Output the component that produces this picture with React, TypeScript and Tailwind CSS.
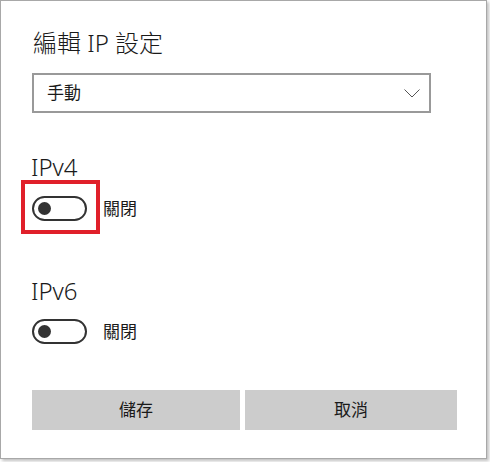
import React from "react";

const font = { fontFamily: '"Noto Sans", "Noto Sans CJK TC", sans-serif' };

function Toggle() {
  return (
    <div className="w-[55px] h-[25px] rounded-full border-2 border-[#333333] flex items-center box-border">
      <div className="w-[13px] h-[13px] rounded-full bg-[#333333] ml-[4px]" />
    </div>
  );
}

export default function App() {
  return (
    <div className="w-[490px] h-[462px] bg-white" style={font}>
      <div className="relative w-[487px] h-[459px] bg-white border border-[#a8a8a8] shadow-[2px_2px_3px_rgba(0,0,0,0.25)] box-border">
        <div className="flex flex-col pl-[31px] pt-[26px]">
          <div className="text-[24px] leading-[32px] font-light text-[#1a1a1a] pl-[1px]">編輯 IP 設定</div>
          <div className="mt-[14px] w-[399px] h-[40px] border-2 border-[#999999] flex items-center justify-between pl-[13px] pr-[9px] box-border">
            <span className="text-[17px] leading-[24px] text-[#1a1a1a]">手動</span>
            <svg width="16" height="9" viewBox="0 0 16 9" fill="none">
              <path d="M0.5 0.5 L8 8 L15.5 0.5" stroke="#555" strokeWidth="1" />
            </svg>
          </div>
          <div className="mt-[38px] -ml-[1px] text-[24px] leading-[32px] font-light text-[#1a1a1a]">IPv4</div>
          <div className="mt-[13px] flex items-center gap-[16px]">
            <Toggle />
            <span className="text-[17px] leading-[24px] text-[#1a1a1a]">關閉</span>
          </div>
          <div className="mt-[54px] -ml-[1px] text-[24px] leading-[32px] font-light text-[#1a1a1a]">IPv6</div>
          <div className="mt-[12px] flex items-center gap-[16px]">
            <Toggle />
            <span className="text-[17px] leading-[24px] text-[#1a1a1a]">關閉</span>
          </div>
          <div className="mt-[46px] flex gap-[5px]">
            <button className="w-[208px] h-[40px] bg-[#cccccc] text-[17px] text-[#1a1a1a]">儲存</button>
            <button className="w-[212px] h-[40px] bg-[#cccccc] text-[17px] text-[#1a1a1a]">取消</button>
          </div>
        </div>
        <div className="absolute left-[20px] top-[179px] w-[79px] h-[54px] border-4 border-[#e0202a] box-border" />
      </div>
    </div>
  );
}
